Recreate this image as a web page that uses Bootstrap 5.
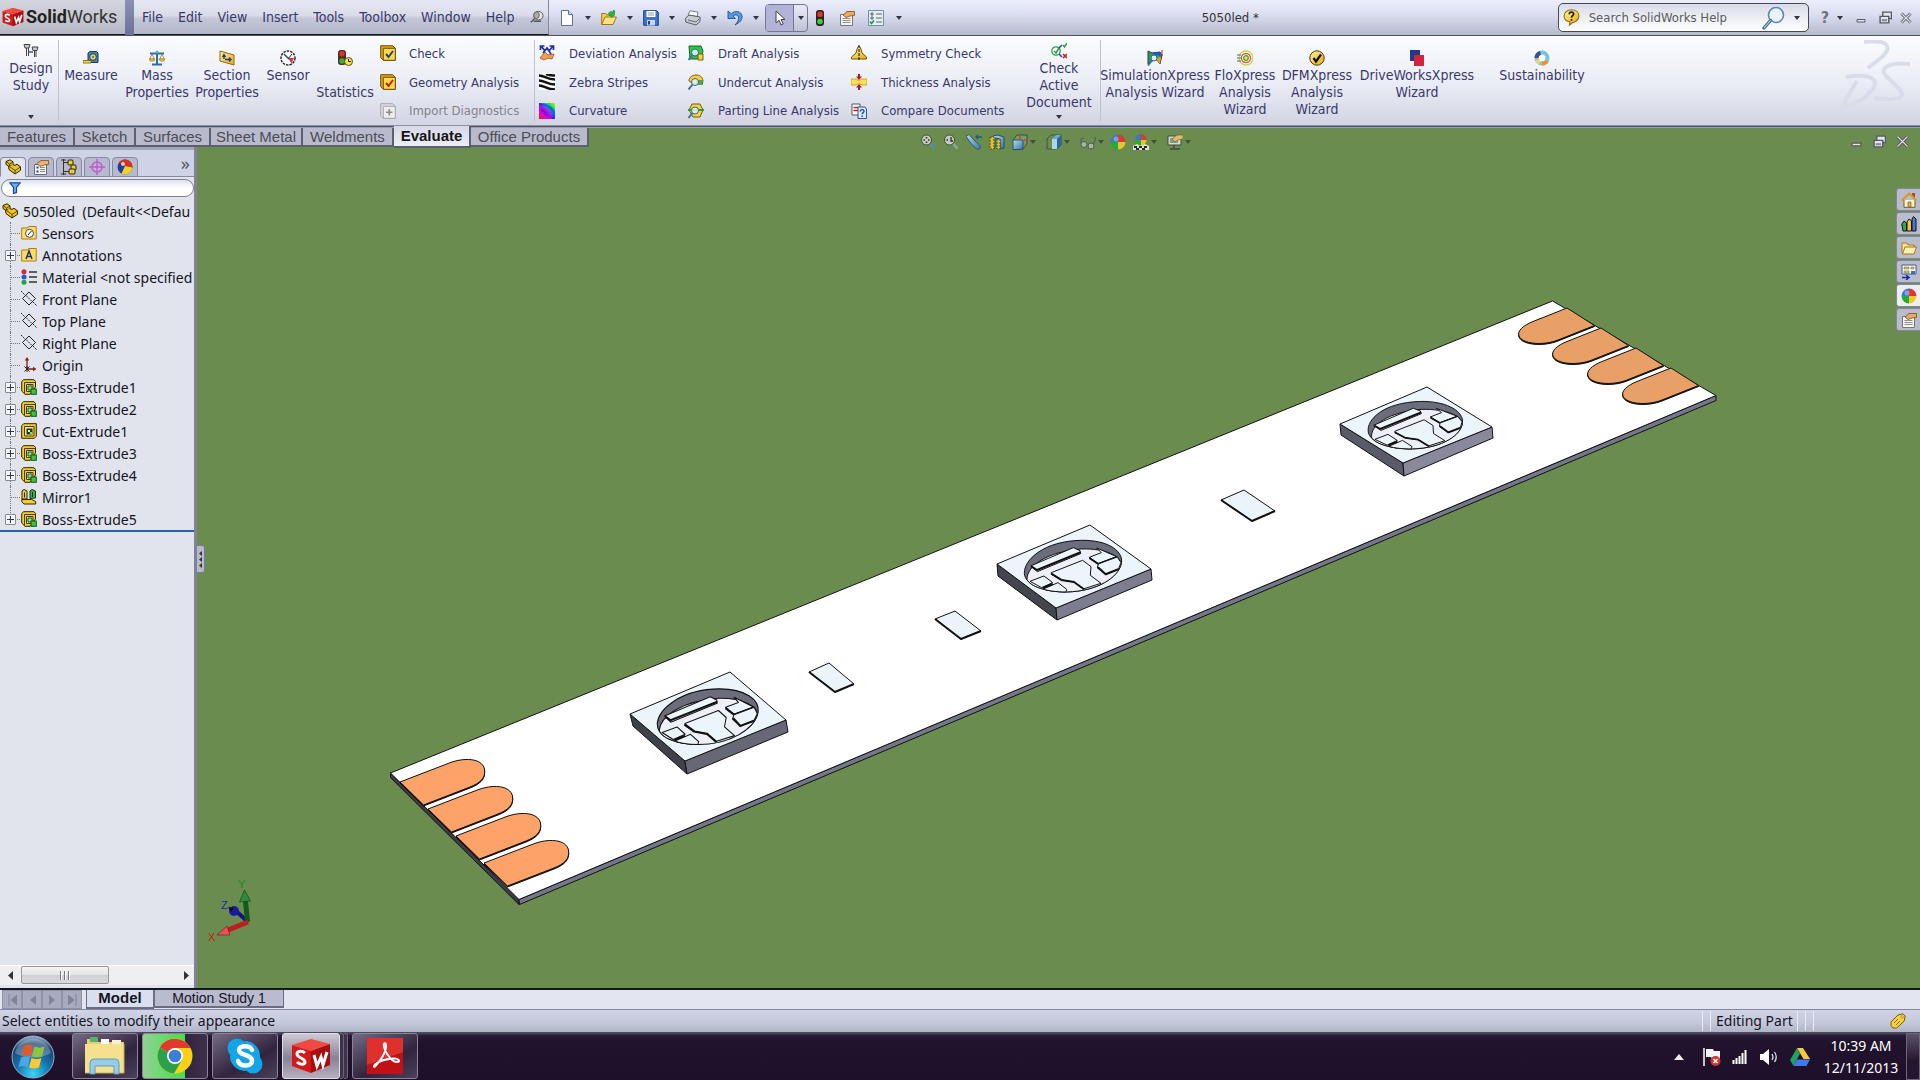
<!DOCTYPE html>
<html lang="en">
<head>
<meta charset="utf-8">
<meta name="viewport" content="width=device-width, initial-scale=1">
<title>SolidWorks - 5050led</title>
<link href="https://cdn.jsdelivr.net/npm/bootstrap@5.3.0/dist/css/bootstrap.min.css" rel="stylesheet">
<style>
:root{--ink:#38386c;--line:#50545f;--ui:"DejaVu Sans Condensed","DejaVu Sans",sans-serif;--seg:"Noto Sans","Open Sans",sans-serif;--ari:"Liberation Sans",Arial,sans-serif}
body{font-family:var(--ui);font-size:14px;line-height:17px;color:#15151f;background:#6a8c4f;overflow:hidden}
svg{display:block;flex:none}
.ico{width:16px;height:16px}
button,.btn{border:0;border-radius:0;padding:0;background:none;color:inherit;font-size:inherit;line-height:inherit}
a{color:inherit;text-decoration:none}
.caret{width:0;height:0;border:3px solid transparent;border-top:4px solid #33334a;border-bottom:0;flex:none}

/* title bar */
.titlebar{height:36px;background:linear-gradient(#eceefb,#dcdff0 40%,#b6bacf);border-bottom:1px solid var(--line)}
.brandbox{width:125px;padding-left:2px;gap:2px;background:linear-gradient(#d4d5de,#c4c6d0 60%,#b4b6c2);border-bottom:1px solid #15151f}
.brandname{font:400 18px/24px Roboto,sans-serif;color:#333}
.brandname b{color:#222}
.divider{width:9px;background:linear-gradient(#8d90b5,#6d709a)}
.menubar{width:415px;padding-left:8px;background:linear-gradient(#e6e8f4,#dadce9 45%,#c3c6d6 55%,#b4b7ca);border-right:1px solid #84889c;border-bottom:1px solid #15151f;color:var(--ink)}
.menubar .nav-link{padding:0;color:var(--ink)}
.menubar .nav{gap:15px}
.quick{padding-left:6px}
.tool{width:24px;height:27px;display:flex;align-items:center;justify-content:center}
.drop{width:18px;height:27px;display:flex;align-items:center;justify-content:center}
.wide{width:29px}
.picked{height:28px;border:1px solid #74778e;border-radius:4px;overflow:hidden}
.picked .tool{width:28px;background:#b1b4d8;border-right:1px solid #74778e}
.picked .drop{width:13px}
.doctitle{width:60px;color:#333;font-size:13px}
.searchbox{width:251px;height:29px;border:1px solid #444757;border-radius:5px;background:linear-gradient(#d9dce8,#fff);padding:0 4px;margin-left:296px}
.searchbox input{border:0;background:none;outline:0;font-size:13px;flex:1;min-width:0;color:#555;padding:0 0 0 9px}
.searchbox input::placeholder{color:#5b5b63;opacity:1}

/* ribbon */
.ribbon{height:89px;background:linear-gradient(#fbfcff,#eceef6 50%,#d2d4e2);color:var(--ink)}
.ribbonedge{height:3px;background:linear-gradient(#8e92a8 33%,var(--line) 33% 66%,#9a9eb2 66%)}
.vsep{width:1px;background:#bfc1cf;margin:4px 0}
.big{display:flex;flex-direction:column;align-items:center;justify-content:flex-start;text-align:center;padding-top:14px;flex:none}
.big svg{margin-bottom:1px}
.big.tall{padding-top:7px;padding-left:4px;position:relative}
.big.tall .caret{position:absolute;bottom:6px}
.rows{display:flex;flex-direction:column;padding:3px 0 0 4px;flex:none;font-size:13px}
.rowbtn{display:flex;align-items:center;gap:14px;height:29px;white-space:nowrap}
.c1 .rowbtn{gap:13px}
.dim{color:#84848e}
.w50{width:50px}.w58{width:58px}.w64{width:64px}.w68{width:68px}.w72{width:72px}.w82{width:86px}.w108{width:108px}.w122{width:122px}.w128{width:128px}
.c1{width:157px;padding-left:3px}.c2{width:149px}.c3{width:163px}.c4{width:167px}

/* workspace */
.work{background:#6a8d4f}
.scene{position:absolute;inset:0;width:100%;height:100%}
.cmtabs{height:19px;font:15px/18px var(--ari);color:#484852;z-index:2}
.cmtabs .nav-link{padding:0;text-align:center;color:#4c4c56;background:#b9bbcd;border-right:2px solid #5c5f70;border-bottom:2px solid #5c5f70;border-radius:0;height:19px;line-height:17px}
.cmtabs .nav-link.active{background:linear-gradient(#d6d8e5,#eceef5);color:#15151c;font-weight:700;height:22px;margin-top:-2px;line-height:20px}
.t61{width:61px}.t74{width:75px}.t75{width:75px}.t77{width:77px}.t91{width:91px}.t92{width:92px}.t118{width:118px}
.headsup{top:6px;left:917px;gap:1px;opacity:.9}
.headsup .tool{width:22px;height:16px}
.headsup .drop{width:10px;height:16px;margin-left:-4px}
.headsup .caret{border-top-color:#3d4c33}
.docbtns{top:7px;right:11px;gap:10px}
.side{width:197px;background:#e1e4ec;border-right:3px solid #7f8399;z-index:1;font-family:var(--seg)}
.sidehead{height:30px;background:#cfd3e6;border-top:3px solid #a2a6bb;border-bottom:1px solid #8589a2;gap:2px}
.ftab{width:26px;height:20px;margin-bottom:-1px;border:1px solid #8589a2;border-bottom-color:#8589a2;border-radius:4px 4px 0 0;background:#b7bace;display:flex;align-items:center;justify-content:center}
.ftab.on{background:#e1e4ec;border-bottom-color:#e1e4ec}
.more{font-size:18px;color:#555868;margin-left:auto;padding-right:4px}
.filter{height:18px;margin:2px 0 3px 1px;border:1px solid #7d8193;border-radius:9px;background:linear-gradient(#dfe2ef,#fff 50%);padding-left:7px}
.filter input{border:0;background:none;outline:0;flex:1;min-width:0;height:14px;padding:0 4px}
.tree{margin:0;padding:0;list-style:none;overflow:hidden;border-bottom:2px solid #2a62a8;font-size:14px;white-space:nowrap;position:relative}
.tree li{height:22px;display:flex;align-items:center;position:relative}
.tree .root{padding-left:2px;gap:5px}
.tree .kid{padding-left:21px;gap:5px}
.tree .kid::before{content:"";position:absolute;left:10px;top:0;height:22px;border-left:1px dotted #777}
.tree .kid:last-child::before{height:11px}
.tree .kid::after{content:"";position:absolute;left:11px;top:11px;width:9px;border-top:1px dotted #777}
.plus{position:absolute;left:5px;top:6px;width:11px;height:11px;z-index:1;border:1px solid #868a96;border-radius:1px;background:linear-gradient(#2f3a66,#2f3a66) 1px 4px/7px 1px no-repeat,linear-gradient(#2f3a66,#2f3a66) 4px 1px/1px 7px no-repeat,#f6f6fa}
.hbar{height:20px;background:#efeff2;margin-bottom:3px;border-top:1px solid #fff}
.hbar button{width:21px;height:18px;display:flex;align-items:center;justify-content:center}
.hbar button:last-child{width:16px}
.thumb{width:88px;height:18px;border:1px solid #979797;border-radius:2px;background:linear-gradient(#f4f4f4,#e4e4e6 50%,#cfcfd4 50%,#d9d9de);display:flex;align-items:center;justify-content:center;gap:2px}
.thumb i{width:2px;height:9px;background:#777a80;border-right:1px solid #fff}
.handle{left:197px;top:417px;width:8px;height:28px;background:#b7bace;border:1px solid #777b92;border-left:0;border-radius:0 3px 3px 0;z-index:2}
.taskpane{top:60px;right:0;z-index:2;gap:1px}
.taskpane button{width:24px;height:23px;border:1px solid #83879d;border-right:0;border-radius:3px 0 0 3px;background:#b9bccd;display:flex;align-items:center;justify-content:center}
.taskpane .on{background:#eceef4}

/* footer rows */
.sheets{height:22px;background:#e3e6ee;border-top:2px solid #15151f;border-bottom:1px solid #8286a0;padding-left:2px}
.sheets .nav-link{padding:0;text-align:center;height:18px;border:1px solid #6a6d82;border-top:0;border-bottom-width:2px;color:#15151f;background:#b9bbcf;border-radius:0;font:14px/16px var(--ari)}
.sheets .nav-link.active{background:#dadff0;font-weight:700;font-size:15px;height:19px}
.vcr{width:20px;height:19px;border:1px solid #8e91a8;background:#a8abc0;display:flex;align-items:center;justify-content:center}
.mtab{width:68px}.stab{width:130px}
.statusbar{height:23px;background:linear-gradient(#d0d4e6,#c3c7da 60%,#b0b4c8);border-bottom:1px solid #4b4b5c;font:14px/22px var(--seg);padding-left:2px}
.pane{border-left:1px solid #e9ebf4;height:20px;width:8px;line-height:20px}
.editing{width:87px;padding-left:5px}
.statustag{margin:0 14px 0 69px}
.taskbar{height:47px;background:linear-gradient(#4a3f58 1px,#2b1c3a 2px,#21122d 8px,#1e0f2a);color:#fff;font-family:var(--seg)}
.orb{width:66px;margin-right:6px;display:flex;align-items:center;justify-content:center}
.task{width:66px;height:46px;border:1px solid #8d8498;border-radius:3px;background:linear-gradient(150deg,#756b84,#41354f 45%,#30243f 60%,#4b405a);display:flex;align-items:center;justify-content:center}
.task.progress-on{background:linear-gradient(90deg,#8fd391,#44e04a 66%,#30243f 66%,#3d314b)}
.task.front{width:58px;background:linear-gradient(#cdc9d4,#8a8297 55%,#b5b0be);border-color:#e0dde6}
.stack{width:4px;height:46px;border:1px solid #6d6478;border-left:0;border-radius:0 3px 3px 0;background:#3d314b}
.tray{gap:11px}
.clock{width:80px;margin-right:5px;padding-top:2px;font-size:14px;line-height:22px;text-align:center}
.peek{width:14px;border:1px solid #6f667b;background:linear-gradient(#5c5368,#241630 60%)}
</style>
</head>
<body>
<svg width="0" height="0" class="position-absolute" aria-hidden="true">
<defs>
<linearGradient id="gy" x1="0" y1="0" x2="1" y2="1"><stop offset="0" stop-color="#fff3a0"/><stop offset="1" stop-color="#eaa90c"/></linearGradient>
<linearGradient id="gb" x1="0" y1="0" x2="1" y2="1"><stop offset="0" stop-color="#c4e6fb"/><stop offset="1" stop-color="#2b74b8"/></linearGradient>
<radialGradient id="orbg" cx=".5" cy=".9" r=".9"><stop offset="0" stop-color="#39d5f5"/><stop offset=".45" stop-color="#1571ad"/><stop offset=".8" stop-color="#1d4670"/><stop offset="1" stop-color="#9fb8cc"/></radialGradient>
<linearGradient id="rb" x1="0" y1="1" x2="1" y2="0"><stop offset="0" stop-color="#e11"/><stop offset=".25" stop-color="#e0c"/><stop offset=".45" stop-color="#22f"/><stop offset=".62" stop-color="#0ce"/><stop offset=".8" stop-color="#1e4"/><stop offset="1" stop-color="#fd0"/></linearGradient>
<symbol id="part" viewBox="0 0 16 16"><path d="M1 2.500 5 .8l3 2v3l2 .5 2-1 3.500 2.500v3.500L10 15 4 10.500 3.500 7 1 5.500z" fill="#f0c419" stroke="#2d2200"/><path d="M1 2.500 4.500 5 8 3M4.500 5v2.500L10 11.500l5.500-3.500M10 11.500V15M3.500 7l3-1" fill="none" stroke="#4a3a00" stroke-width=".9"/></symbol>
<symbol id="propman" viewBox="0 0 16 16"><path d="M1.500 5.500h12v10h-12z" fill="#f2f2ee" stroke="#6c6c70"/><path d="M3.500 8.500h2M3.500 12.500h2" stroke="#24a" stroke-width="2"/><path d="M7 8.500h5M7 10.500h5M7 12.500h5" stroke="#888"/><path d="M4 4.500 8 1.500h7.500v4L11 6 7 7.500z" fill="#e6b479" stroke="#7c4b1c" stroke-width=".8"/></symbol>
<symbol id="props" viewBox="0 0 16 16"><path d="M1.500 4.500h12v11h-12z" fill="#f6f5f0" stroke="#77777b"/><path d="M3.500 8.500h8M3.500 10.500h8M3.500 12.500h8" stroke="#8d8d92"/><path d="M4 5 8 1.500h7.500v4L11 6 7 7.500z" fill="#e9a960" stroke="#7c4b1c" stroke-width=".8"/></symbol>
<symbol id="conf" viewBox="0 0 16 16"><path d="M2.500 0v16M2.500 3.500h5M2.500 12.500h5" stroke="#333"/><path d="M0 1h5M0 15h5" stroke="#333"/><rect x="7" y="1" width="5" height="5" rx="1" fill="#f5cd22" stroke="#222"/><rect x="10" y="6" width="5" height="5" rx="1" fill="#f5cd22" stroke="#222"/><rect x="8" y="10" width="6" height="5" rx="1" fill="#f5cd22" stroke="#222"/></symbol>
<symbol id="target" viewBox="0 0 16 16"><circle cx="8" cy="8" r="5" fill="none" stroke="#c05bd0" stroke-width="1.500"/><path d="M8 0v16M0 8h16" stroke="#c05bd0" stroke-width="1.400"/></symbol>
<symbol id="ball" viewBox="0 0 16 16"><path d="M8 8V.5A7.500 7.500 0 0 1 15.500 8z" fill="#e3352c"/><path d="M8 8h7.500A7.500 7.500 0 0 1 8 15.500z" fill="#f3cb2d"/><path d="M8 8v7.500A7.500 7.500 0 0 1 .5 8z" fill="#1faf35"/><path d="M8 8H.5A7.500 7.500 0 0 1 8 .5z" fill="#3774dc"/><circle cx="6" cy="5" r="2.500" fill="#fff" opacity=".35"/></symbol>
<symbol id="ball2" viewBox="0 0 16 16"><circle cx="8" cy="8" r="7.500" fill="#263c9c"/><path d="M8 .5a7.500 7.500 0 0 1 7.500 8L8 7 2 3.500A7.500 7.500 0 0 1 8 .5z" fill="#dc3122"/><path d="M8 7l7.500 1.500a7.500 7.500 0 0 1-11 6z" fill="#f0d22a"/><circle cx="6" cy="5" r="2" fill="#fff" opacity=".75"/></symbol>
<symbol id="funnel" viewBox="0 0 12 12"><path d="M.8.8h10.400L7.500 5.500v5l-3 1v-6z" fill="#69b1f2" stroke="#17479e" stroke-width="1.200"/></symbol>
<symbol id="fsens" viewBox="0 0 16 16"><path d="M.7 3h6l1-1.500h7.500V14H.7z" fill="#fbdf62" stroke="#b07c10"/><circle cx="8.500" cy="8.300" r="4" fill="#fff" stroke="#445"/><path d="m7 10 3.500-4" stroke="#224"/></symbol>
<symbol id="fann" viewBox="0 0 16 16"><path d="M.7 3h6l1-1.500h7.500V14H.7z" fill="#fbdf62" stroke="#b07c10"/><path d="m5 12 3-8 3 8M6 9.500h4" fill="none" stroke="#1c2f7c" stroke-width="1.500"/></symbol>
<symbol id="mat" viewBox="0 0 16 16"><circle cx="3" cy="2.800" r="2.500" fill="#d8253c"/><circle cx="3" cy="8" r="2.500" fill="#2b54d0"/><circle cx="3" cy="13.200" r="2.500" fill="#22a046"/><path d="M8 3h8M8 8h8M8 13h8" stroke="#333" stroke-width="1.300"/></symbol>
<symbol id="plane" viewBox="0 0 16 16"><path d="M8 1 14.500 7.500 8 14 1.500 7.500z" fill="none" stroke="#222"/><path d="M0 0l4 4M12 11l4 4M5 4.500l6 6" stroke="#222" stroke-dasharray="2 1"/></symbol>
<symbol id="origin" viewBox="0 0 16 16"><path d="M6 12V2M6 12h8" stroke="#8b1a1a" stroke-width="1.300"/><path d="M6 0 3.800 3.500h4.400zM15.500 12 12 9.800v4.400z" fill="#8b1a1a"/><path d="m3.500 9.500 5 5m0-5-5 5M6 9v6" stroke="#222"/></symbol>
<symbol id="boss" viewBox="0 0 16 16"><path d="M.7 2.500 2.700.7H13l1.500 1.800V8L9 15.300H4L.7 12z" fill="#f1cf2e" stroke="#2d2400"/><path d="M3.500 3.500h11M3.500 3.500V14.500" fill="none" stroke="#4a3b00"/><path d="M5.500 5.500H12v7H5.500z" fill="#fbeE96" stroke="#4a3b00"/><path d="M7 7h4v4H7z" fill="#9de39b" stroke="#0d5a17"/><rect x="10" y="10" width="5.300" height="5.300" fill="#43bf42" stroke="#0d5a17"/></symbol>
<symbol id="cut" viewBox="0 0 16 16"><path d="M.7 2.700 2.700.7h12.600v12.600l-2 2H.7z" fill="#f1cf2e" stroke="#2d2400"/><path d="M3.500 3.500h9.500v9.500H3.500z" fill="#f9e577" stroke="#4a3b00"/><path d="M5.500 5.500h6v6h-6z" fill="#1a3c22"/><path d="M7 7h2v2H7z" fill="#d9f5d9"/><path d="M9 9h2v2H9z" fill="#8be08b"/></symbol>
<symbol id="mirror" viewBox="0 0 16 16"><path d="M1 2l2-1.500L6 2v8H1zM.7 10.500h10l4 2V15H3l-2-2z" fill="#f1cf2e" stroke="#2d2400"/><path d="M9 2l2-1.500L14.500 2v7L9 9.500z" fill="#3fae48" stroke="#0c3d14"/><path d="M3.500 3.500v5M11.500 3v5" stroke="#222"/></symbol>
<symbol id="newdoc" viewBox="0 0 16 16"><path d="M2.500.5h7L13.500 4.500v11h-11z" fill="#fdfdff" stroke="#5c7291"/><path d="M9.500.5v4h4" fill="#cfe0f2" stroke="#5c7291"/></symbol>
<symbol id="open" viewBox="0 0 16 16"><path d="M.7 14.500v-11h4l1 1.500H11v2" fill="#f5cf55" stroke="#a4741a"/><path d="M.7 14.500 4 7h11.500l-3.500 7.500z" fill="#fbe488" stroke="#a4741a"/><path d="M7 4.500C8 1 11 1 12 3V.5h1.500V5l-2.500 2.500L8 5h2.500" fill="#31b83c" stroke="#157a22" stroke-width=".6"/></symbol>
<symbol id="save" viewBox="0 0 16 16"><path d="M.7.7h13l1.600 1.600v13H.7z" fill="#3f74cb" stroke="#1c3f86"/><path d="M3.500 1h9v6h-9z" fill="#fff"/><path d="M5 3h6M5 5h6" stroke="#999"/><path d="M4 10h8v5.500H4z" fill="#c9d8ef"/><path d="M5 11h2v3.500H5z" fill="#1c3f86"/></symbol>
<symbol id="print" viewBox="0 0 16 16"><path d="M3 5 5 .7l8 1.500-1 4.500z" fill="#fff" stroke="#6f7f95"/><path d="m.7 8 3.300-3 11 2v4.500L11 15 .7 12z" fill="#c8ccd4" stroke="#555d6c"/><path d="m3 10 8 2 3-3" fill="none" stroke="#667"/></symbol>
<symbol id="undo" viewBox="0 0 16 16"><path d="M1 1v7.500h7.500L6 6C9 3.500 12 5.500 11.500 9c-.3 2.200-1.700 4-3.500 6 5-2.500 7.500-5.500 7-9C14.300 1 8 0 4.300 3.900z" fill="#5699dc" stroke="#1c549e" stroke-width=".9"/></symbol>
<symbol id="cursor" viewBox="0 0 16 16"><path d="M4 1v12l3-2.800L9 15l2.200-1L9 9.500h4z" fill="#fff" stroke="#444"/></symbol>
<symbol id="light" viewBox="0 0 16 16"><rect x="4" y="0" width="8" height="16" rx="3" fill="#33221c"/><circle cx="8" cy="4.300" r="2.800" fill="#e13434"/><circle cx="8" cy="11.500" r="2.800" fill="#37ce45"/></symbol>
<symbol id="opts" viewBox="0 0 16 16"><path d="M.5.500h15v15H.5z" fill="#e6eef5" stroke="#7590a5"/><path d="M3 3h2v2H3zM3 7h2v2H3z" fill="none" stroke="#567"/><path d="M8 4h6M8 8h6M8 12h6" stroke="#666"/><path d="m2 11.500 1.500 2L6 10.500" fill="none" stroke="#1a9a35" stroke-width="1.600"/></symbol>
<symbol id="pin" viewBox="0 0 16 16"><ellipse cx="10" cy="6" rx="5" ry="4.500" fill="#e6e6ea" stroke="#555"/><ellipse cx="8" cy="5.500" rx="3" ry="3.500" fill="#aaa" stroke="#666"/><path d="M2 13l4-4M5 12h8" stroke="#555" stroke-width="1.500"/></symbol>
<symbol id="help" viewBox="0 0 16 16"><path d="M8 .7c4.500 0 7 2.600 7 5.800 0 4-4 6-6 6.300L6 15.300 6.500 12C3 11.500 1 9.500 1 6.500 1 3.300 3.800.7 8 .7z" fill="url(#gy)" stroke="#8f6a0b"/><path d="M5.800 5c.2-3 4.800-2.500 4.200 0C9.700 6.200 8 6.300 8 8.300M8 9.500v1.600" stroke="#222" stroke-width="1.600" fill="none"/></symbol>
<symbol id="lens" viewBox="0 0 24 24"><circle cx="14" cy="9" r="7.500" fill="#eaf3fa" stroke="#5a88ad" stroke-width="1.600"/><path d="M8.500 14.500 2 22" stroke="#47759b" stroke-width="3.400" stroke-linecap="round"/><path d="M8.500 14.500 2 22" stroke="#cfe2f0" stroke-width="1"/></symbol>
<symbol id="wmin" viewBox="0 0 12 12"><path d="M2 7.500h8v2.500H2z" fill="#e8e8ec" stroke="#555866"/></symbol>
<symbol id="wres" viewBox="0 0 12 12"><path d="M3.500 1h8v6h-8z" fill="#e4e6ee" stroke="#555866" stroke-width="1.300"/><path d="M1 5h8v6H1z" fill="#e4e6ee" stroke="#555866" stroke-width="1.300"/><path d="M2.500 7.500h5v2h-5z" fill="#888b99"/></symbol>
<symbol id="wcls" viewBox="0 0 12 12"><path d="m1.500 1.500 9 9m0-9-9 9" stroke="#555866" stroke-width="3"/><path d="m1.500 1.500 9 9m0-9-9 9" stroke="#dfe1e8" stroke-width="1.300"/></symbol>
<symbol id="study" viewBox="0 0 16 16"><path d="M1 1.500h6L6 5H2zM3.500 5v8M5.500 5v8M9 4h6l-1 3.500h-4zM11.500 8v6M13 8v6" fill="#ccc" stroke="#444"/><path d="M6 9h4" stroke="#25b" stroke-width="1.400"/></symbol>
<symbol id="measure" viewBox="0 0 16 16"><path d="M5 3l2-1.500h6.500L15 3v9.500H5z" fill="#4683bd" stroke="#16395f"/><circle cx="10" cy="7" r="3.300" fill="#f8dc55" stroke="#16395f"/><circle cx="10" cy="7" r="1.200" fill="#4683bd"/><path d="M0 10.500h8v2.500H0z" fill="#f8dc33" stroke="#765a08" stroke-width=".8"/></symbol>
<symbol id="mass" viewBox="0 0 16 16"><path d="M8 1v13M1 3.500h14M3 14.500h10" stroke="#2271b8" stroke-width="2"/><circle cx="8" cy="2" r="1.600" fill="#66a8e0"/><path d="M3 4 .8 9h4.400zM13 4l-2.200 5h4.400z" fill="#fff" stroke="#987414" stroke-width=".8"/><path d="M0 9h6c0 3-6 3-6 0zM10 9h6c0 3-6 3-6 0z" fill="#f1c232" stroke="#987414" stroke-width=".6"/></symbol>
<symbol id="section" viewBox="0 0 16 16"><path d="m1 1 14 4v10L1 11z" fill="url(#gy)" stroke="#8b6a0c"/><path d="M5 9V5m-1.500 2L5 4.500 6.500 7M6 9.500h6m-2-2 2 2-2 2" fill="none" stroke="#1c3b94" stroke-width="1.400"/></symbol>
<symbol id="gauge" viewBox="0 0 16 16"><circle cx="8" cy="8" r="7" fill="#fff" stroke="#222" stroke-width="1.400" stroke-dasharray="2.500 1"/><path d="m4 4 5 5" stroke="#224a9b" stroke-width="1.500"/><path d="M8 8h6l-2.500 5.500z" fill="#d93636"/><path d="m8 9 4-5" stroke="#222"/></symbol>
<symbol id="stats" viewBox="0 0 16 16"><rect x="1" y="0" width="8" height="15" rx="3" fill="#4b2d24"/><circle cx="5" cy="3.700" r="2.700" fill="#d73535"/><circle cx="5" cy="11" r="2.700" fill="#2fb43e"/><circle cx="11.500" cy="11.500" r="4" fill="#f6e24a" stroke="#5e5110"/><path d="M11.500 9v2.500H14" fill="none" stroke="#222"/></symbol>
<symbol id="chk" viewBox="0 0 16 16"><path d="M.7.7h12l2.600 2.600v12H3.300L.7 12.700z" fill="#e4a112" stroke="#70500b"/><path d="M3.300 3.300h12v12h-12z" fill="#fdda48" stroke="#70500b"/><path d="m6 9 2.500 3L13 6" fill="none" stroke="#263f91" stroke-width="2"/></symbol>
<symbol id="geo" viewBox="0 0 16 16"><path d="M.7.7h12l2.600 2.600v12H3.300L.7 12.700z" fill="#e4a112" stroke="#70500b"/><path d="M3.300 3.300h12v12h-12z" fill="#fdda48" stroke="#70500b"/><path d="m6 9 2.500 3L13 6" fill="none" stroke="#c3201b" stroke-width="2"/></symbol>
<symbol id="imp" viewBox="0 0 16 16"><path d="M.7.7h12l2.600 2.600v12H3.300L.7 12.700z" fill="#dcdce2" stroke="#a5a5ad"/><path d="M3.300 3.300h12v12h-12z" fill="#eee" stroke="#a5a5ad"/><path d="M9.300 6v6.500M6 9.300h6.500" stroke="#8a8a92" stroke-width="1.600"/></symbol>
<symbol id="dev" viewBox="0 0 16 16"><path d="M1 13 6 7l3 3 6-1-2 5-4-1-4 2z" fill="#efa04a" stroke="#b4632a"/><path d="M2 1l4 5M1.500 5V1h4M14 1l-4 5M10.500 1h4v4M4 8l4-5 4 6" stroke="#1d2fa5" stroke-width="1.700" fill="none"/></symbol>
<symbol id="zebra" viewBox="0 0 16 16"><path d="M0 0h16v16H0z" fill="#fff"/><path d="M0 1.500c6 0 7 4 16 4M0 6.500c6 0 7 4 16 4M0 11.500c6 0 7 4 16 4M7 0c3 1 5 1.500 9 1.500" fill="none" stroke="#111" stroke-width="2.400"/></symbol>
<symbol id="curv" viewBox="0 0 16 16"><path d="M0 0h16v16H0z" fill="url(#rb)"/><path d="M0 6c6 0 8 4 9 10h4C13 8 9 3 0 2z" fill="#e0c" opacity=".7"/><path d="M0 2c8 0 13 5 14 14h2V8C13 3 8 0 0 0z" fill="#22e" opacity=".6"/></symbol>
<symbol id="draft" viewBox="0 0 16 16"><path d="M1 1h12l2 5-2 8H2z" fill="#2fc244" stroke="#0e6e1e"/><path d="M10 9h5v6h-5z" fill="#f7d33a" stroke="#7a5b08"/><circle cx="7" cy="7.500" r="3.500" fill="#e4f4fd" fill-opacity=".85" stroke="#35648c"/><path d="m4.500 10-4 5" stroke="#3b72a6" stroke-width="2"/></symbol>
<symbol id="under" viewBox="0 0 16 16"><path d="M1 7c0-8 14-8 14 0l-1 4-3-3-4 2-3-1z" fill="#f5d33c" stroke="#7a5b08"/><path d="M8 6h6v5H9z" fill="#3dae4a"/><circle cx="7" cy="8" r="3.500" fill="#e4f4fd" fill-opacity=".85" stroke="#35648c"/><path d="m4.500 10.500-4 5" stroke="#3b72a6" stroke-width="2"/></symbol>
<symbol id="partl" viewBox="0 0 16 16"><path d="m4 1 8 0 3 6-3 7H5L1 7z" fill="#f5d33c" stroke="#7a5b08"/><path d="M0 7h16" stroke="#1fa637" stroke-width="2"/><circle cx="7" cy="7.500" r="3.500" fill="#e4f4fd" fill-opacity=".85" stroke="#35648c"/><path d="m4.500 10-4 5" stroke="#3b72a6" stroke-width="2"/></symbol>
<symbol id="symm" viewBox="0 0 16 16"><path d="M6.500 2.500c1-1.500 2-1.500 3 0L11 8l4.500 4v2H.5v-2L5 8z" fill="url(#gy)" stroke="#70500b"/><path d="M8 0v16" stroke="#111" stroke-dasharray="3 1"/></symbol>
<symbol id="thick" viewBox="0 0 16 16"><path d="M0 5h5l3 1.500L11 5h5v6h-5L8 9.500 5 11H0z" fill="#fae14d" stroke="#b88c18" stroke-width=".7"/><path d="M8 0v3M8 16v-3" stroke="#b31b1b" stroke-width="2"/><path d="M5 2.500h6L8 6zM5 13.500h6L8 10z" fill="#b31b1b"/></symbol>
<symbol id="comp" viewBox="0 0 16 16"><path d="M1 1h8v11H1z" fill="#fff" stroke="#555"/><path d="M2.500 4.500h5M2.500 7.500h5" stroke="#d01c1c" stroke-width="1.700"/><path d="M7 4h7l1.500 2v9.500H7z" fill="#dbe9f8" stroke="#2b5797"/><path d="M9.300 8.500c0-2.500 4-2.500 3.700 0-.1 1.200-1.800 1-1.800 2.800M11.200 12.500V14" stroke="#17479e" stroke-width="1.400" fill="none"/></symbol>
<symbol id="cad" viewBox="0 0 16 16"><circle cx="5" cy="8" r="4.200" fill="#fff" stroke="#2a9c48" stroke-width="1.300"/><path d="m3 8 2 2 3-5M12 2l1.500 2L16 0" fill="none" stroke="#2a9c48" stroke-width="1.500"/><path d="m12 11 4 4m0-4-4 4" stroke="#c42020" stroke-width="1.600"/><path d="m8 5 3-3M8 11l3 3" stroke="#2746b5" stroke-width="1.500"/></symbol>
<symbol id="sim" viewBox="0 0 16 16"><path d="M1 1l4 2 8-1 2 3-2 9-3-4-6 1-3 3z" fill="#2f9c4d" stroke="#1c3c5c"/><path d="M5 3l8-1 1 4-6-1z" fill="#2359c6"/><path d="M10 8l4-1-1 7-3-3z" fill="#e2a01f"/><circle cx="7" cy="8" r="3" fill="#dcefff" stroke="#35648c"/><path d="m5 10.500-4 5" stroke="#3b72a6" stroke-width="2"/><path d="M15 0v6" stroke="#c22"/></symbol>
<symbol id="flo" viewBox="0 0 16 16"><circle cx="9" cy="8" r="7" fill="#fff" stroke="#c9d94b" stroke-width="1.500"/><circle cx="9" cy="8" r="4.600" fill="#ffe" stroke="#e25a3c" stroke-width="1.500"/><circle cx="9" cy="8" r="2.300" fill="#fbe04a" stroke="#3aa04c" stroke-width="1.300"/><path d="M0 5h4M0 8h4M0 11h4" stroke="#37a"/></symbol>
<symbol id="dfm" viewBox="0 0 16 16"><circle cx="8" cy="8" r="7.200" fill="url(#gy)" stroke="#4a3a10"/><path d="m4.500 8 2.500 3.500L12 4.500" fill="none" stroke="#111" stroke-width="2.200"/></symbol>
<symbol id="dwx" viewBox="0 0 16 16"><path d="M1 0h10v11H1z" fill="#20398e"/><path d="M5 5h10v11H5z" fill="#d3243a"/></symbol>
<symbol id="sust" viewBox="0 0 16 16"><circle cx="8" cy="8" r="5.500" fill="#fff" stroke="#7ac2e3" stroke-width="4"/><path d="M2.500 8a5.500 5.500 0 0 1 4-5.200" fill="none" stroke="#3f4f94" stroke-width="4"/><path d="M13 11a5.500 5.500 0 0 1-5 2.500" fill="none" stroke="#ef9226" stroke-width="4"/><path d="M2.800 10a5.500 5.500 0 0 0 3 3" fill="none" stroke="#f0d75a" stroke-width="4"/></symbol>
<symbol id="zfit" viewBox="0 0 16 16"><circle cx="6.500" cy="6" r="5" fill="#cfd6c8" stroke="#3c4638"/><path d="M6.500 3v1.500M6.500 7.500V9M3.500 6H5M8 6h1.500" stroke="#223" stroke-width="1.600"/><path d="m10.500 10 4 4.500" stroke="#4c8fc6" stroke-width="2.500"/></symbol>
<symbol id="zarea" viewBox="0 0 16 16"><circle cx="6.500" cy="6" r="5" fill="#cfd6c8" stroke="#3c4638"/><path d="M3.500 6H5M8 3v4h2" stroke="#223" stroke-width="1.300" fill="none"/><path d="m10.500 10 4 4.500" stroke="#8fa8ba" stroke-width="2.500"/></symbol>
<symbol id="prev" viewBox="0 0 16 16"><path d="m0 2 3-1.500L8 6l6.500 6-.5 2.500-3 1L4.500 9z" fill="url(#gb)" stroke="#25517c"/><path d="M16 3h-6m2-2-2 2 2 2" fill="none" stroke="#1f50a0" stroke-width="1.300"/></symbol>
<symbol id="secv" viewBox="0 0 16 16"><path d="M4 2 9 1l6 2v11l-4 1V5L6 4v10H4z" fill="url(#gb)" stroke="#1c4770"/><path d="M1 3h4v12H1zM8 5h3v10H8z" fill="#e8c52e" stroke="#5b4a08" stroke-dasharray="2 1"/></symbol>
<symbol id="vori" viewBox="0 0 16 16"><path d="M1 6 5 1h10v9l-4 5" fill="#9fb79a" fill-opacity=".4" stroke="#39463a"/><path d="M1 6h10v9.500H1z" fill="url(#gb)" stroke="#244c70"/><path d="M8 1v4M12 6h4M13 10l2 1" stroke="#c8402a" stroke-width="1.500"/></symbol>
<symbol id="dsty" viewBox="0 0 16 16"><path d="M1 5 5 1h10v10l-4 4H1z" fill="none" stroke="#3b4f40"/><path d="M6 5h5v10H6z" fill="#b7dcf5"/><path d="m11 5 4-4v10l-4 4z" fill="#2261ad"/><path d="m6 5 4-4h5l-4 4z" fill="#6caee2"/></symbol>
<symbol id="hide" viewBox="0 0 16 16"><circle cx="4" cy="10.500" r="3" fill="#a7bdae" stroke="#49594c"/><circle cx="11" cy="12" r="3" fill="#a7bdae" stroke="#49594c"/><path d="M1 9V5l3-1M13.500 10l2.500-6h-2" fill="none" stroke="#49594c"/></symbol>
<symbol id="scn" viewBox="0 0 16 16"><path d="M0 16v-4l4-2h8l4 2v4z" fill="#e9e9e9"/><path d="M1 12h3v2H1zM6 12h3v2H6zM11 12h3v2h-3zM3 14h3v2H3zM9 14h3v2H9z" fill="#222"/><path d="M8 6V0a5.500 5.500 0 0 1 5.500 6z" fill="#e3352c"/><path d="M8 6h5.500A5.500 5.500 0 0 1 8 11.500z" fill="#f3cb2d"/><path d="M8 6v5.500A5.500 5.500 0 0 1 2.500 6z" fill="#1faf35"/><path d="M8 6H2.500A5.500 5.500 0 0 1 8 0z" fill="#3774dc"/></symbol>
<symbol id="vset" viewBox="0 0 16 16"><path d="M1 2h13v9H1z" fill="#dfe4dc" stroke="#3c443a"/><path d="M3 4h8v5H3z" fill="#8d9c88"/><path d="M7 11v3M3 15h10" stroke="#3c443a" stroke-width="1.500"/><path d="m5 5 5-4h6v4l-5 1-3 2z" fill="#e8bf7a" stroke="#7c5a1c" stroke-width=".7"/></symbol>
<symbol id="home" viewBox="0 0 16 16"><path d="M3 8v7.300h11V8" fill="#fdf4cd" stroke="#7b5b22"/><path d="M11 1h3v5h-3z" fill="#b5442c"/><path d="M.8 8.500 8.300 1.500l7 7" fill="none" stroke="#d99a25" stroke-width="2.200"/><path d="M7 10h3v5H7z" fill="#e3ae42" stroke="#7b5b22" stroke-width=".7"/></symbol>
<symbol id="lib" viewBox="0 0 16 16"><path d="M.8 8 3 5l2.500 2v8H2z" fill="#3aa54a" stroke="#111"/><path d="M6 6l2-3 2.500 2v10H6z" fill="#f0cb37" stroke="#111"/><path d="M11 3l1.500-2.500L15 3v12h-4z" fill="#4b78d8" stroke="#111"/></symbol>
<symbol id="fold" viewBox="0 0 16 16"><path d="M1 13V3h5l1 2h6v2" fill="#fbe290" stroke="#a87718"/><path d="m1.500 14 2.500-7h11.500L13 14z" fill="#fdf0b4" stroke="#a87718"/></symbol>
<symbol id="pal" viewBox="0 0 16 16"><path d="M1 1h14v9H1z" fill="#fff" stroke="#3f5a88"/><path d="M3 3h5v2H3zM10 3h3v2h-3zM3 7h5v2H3z" fill="#e8cf33" stroke="#555" stroke-width=".5"/><path d="M10 7h4v3h-4z" fill="#3e6db5"/><path d="M1 13.500h6M5 11l3 2.500L5 16" stroke="#1726a5" stroke-width="1.500" fill="none"/></symbol>
<symbol id="tag" viewBox="0 0 16 16"><path d="M1 9 8 2l5-1.200L15.200 3l-1 5-7.500 7H3l-2-2.500z" fill="#f7d436" stroke="#7a5a08"/><circle cx="12" cy="4" r="1.200" fill="#fff" stroke="#7a5a08" stroke-width=".6"/><path d="m4 10 4-4M6 12l4-4" stroke="#8c6a10"/></symbol>
<symbol id="swcube" viewBox="0 0 40 36"><path d="M1 7 20 1l19 5-19 7z" fill="#f24a42"/><path d="M1 7l19 6v22L1 28z" fill="#d01a1a"/><path d="M39 6 20 13v22l19-8z" fill="#a80e10"/><path d="M14 15c-3-3-8-2-8 1 0 4 8 4 8 8 0 3-5 3-8 0" fill="none" stroke="#fff" stroke-width="3"/><path d="m23 17 3 11 4-9 2 8 4-13" fill="none" stroke="#fff" stroke-width="3"/></symbol>
</defs>
</svg>

<div class="d-flex flex-column vh-100">
<header class="titlebar d-flex align-items-center flex-shrink-0">
  <div class="brandbox d-flex align-items-center align-self-stretch"><svg width="22" height="22"><use href="#swcube"/></svg><span class="brandname"><b>Solid</b>Works</span></div>
  <div class="divider align-self-stretch"></div>
  <div class="menubar d-flex align-items-center align-self-stretch">
    <nav class="nav flex-nowrap">
      <a class="nav-link" href="#">File</a><a class="nav-link" href="#">Edit</a><a class="nav-link" href="#">View</a><a class="nav-link" href="#">Insert</a><a class="nav-link" href="#">Tools</a><a class="nav-link" href="#">Toolbox</a><a class="nav-link" href="#">Window</a><a class="nav-link" href="#">Help</a>
    </nav>
    <button class="ms-auto me-1" aria-label="Pin menu"><svg width="15" height="15"><use href="#pin"/></svg></button>
  </div>
  <div class="quick d-flex align-items-center flex-grow-1">
    <button class="tool" aria-label="New"><svg class="ico"><use href="#newdoc"/></svg></button><button class="drop" aria-label="New options"><i class="caret"></i></button>
    <button class="tool" aria-label="Open"><svg class="ico"><use href="#open"/></svg></button><button class="drop" aria-label="Open options"><i class="caret"></i></button>
    <button class="tool" aria-label="Save"><svg class="ico"><use href="#save"/></svg></button><button class="drop" aria-label="Save options"><i class="caret"></i></button>
    <button class="tool" aria-label="Print"><svg class="ico"><use href="#print"/></svg></button><button class="drop" aria-label="Print options"><i class="caret"></i></button>
    <button class="tool" aria-label="Undo"><svg class="ico"><use href="#undo"/></svg></button><button class="drop" aria-label="Undo options"><i class="caret"></i></button>
    <span class="picked d-flex"><button class="tool" aria-label="Select"><svg class="ico"><use href="#cursor"/></svg></button><button class="drop" aria-label="Select options"><i class="caret"></i></button></span>
    <button class="tool" aria-label="Rebuild"><svg class="ico"><use href="#light"/></svg></button>
    <button class="tool wide" aria-label="File properties"><svg class="ico"><use href="#props"/></svg></button>
    <button class="tool wide" aria-label="Options"><svg class="ico"><use href="#opts"/></svg></button><button class="drop" aria-label="More options"><i class="caret"></i></button>
  </div>
  <span class="doctitle text-nowrap">5050led *</span>
  <label class="searchbox d-flex align-items-center"><svg width="17" height="17"><use href="#help"/></svg><input type="text" placeholder="Search SolidWorks Help" aria-label="Search SolidWorks Help"><svg width="24" height="24"><use href="#lens"/></svg><i class="caret mx-2 me-1"></i></label>
  <div class="d-flex align-items-center ps-2 pe-2">
    <button class="fw-bold fs-6 text-secondary px-1" aria-label="Help">?</button><i class="caret ms-1 me-2"></i>
    <button class="ms-1" aria-label="Minimize"><svg width="12" height="12"><use href="#wmin"/></svg></button>
    <button class="ms-2 me-1 px-1" aria-label="Restore"><svg width="13" height="13"><use href="#wres"/></svg></button>
    <button aria-label="Close"><svg width="12" height="12"><use href="#wcls"/></svg></button>
  </div>
</header>

<section class="ribbon d-flex flex-shrink-0">
  <button class="big tall w58"><svg class="ico"><use href="#study"/></svg><span>Design<br>Study</span><i class="caret"></i></button><div class="vsep"></div>
  <button class="big w64"><svg class="ico"><use href="#measure"/></svg>Measure</button>
  <button class="big w68"><svg class="ico"><use href="#mass"/></svg><span>Mass<br>Properties</span></button>
  <button class="big w72"><svg class="ico"><use href="#section"/></svg><span>Section<br>Properties</span></button>
  <button class="big w50"><svg class="ico"><use href="#gauge"/></svg>Sensor</button>
  <button class="big w64"><svg class="ico"><use href="#stats"/></svg><span><br>Statistics</span></button>
  <div class="rows c1">
    <button class="rowbtn"><svg class="ico"><use href="#chk"/></svg>Check</button>
    <button class="rowbtn"><svg class="ico"><use href="#geo"/></svg>Geometry Analysis</button>
    <button class="rowbtn dim"><svg class="ico"><use href="#imp"/></svg>Import Diagnostics</button>
  </div><div class="vsep"></div>
  <div class="rows c2">
    <button class="rowbtn"><svg class="ico"><use href="#dev"/></svg>Deviation Analysis</button>
    <button class="rowbtn"><svg class="ico"><use href="#zebra"/></svg>Zebra Stripes</button>
    <button class="rowbtn"><svg class="ico"><use href="#curv"/></svg>Curvature</button>
  </div>
  <div class="rows c3">
    <button class="rowbtn"><svg class="ico"><use href="#draft"/></svg>Draft Analysis</button>
    <button class="rowbtn"><svg class="ico"><use href="#under"/></svg>Undercut Analysis</button>
    <button class="rowbtn"><svg class="ico"><use href="#partl"/></svg>Parting Line Analysis</button>
  </div>
  <div class="rows c4">
    <button class="rowbtn"><svg class="ico"><use href="#symm"/></svg>Symmetry Check</button>
    <button class="rowbtn"><svg class="ico"><use href="#thick"/></svg>Thickness Analysis</button>
    <button class="rowbtn"><svg class="ico"><use href="#comp"/></svg>Compare Documents</button>
  </div>
  <button class="big tall w82"><svg class="ico"><use href="#cad"/></svg><span>Check<br>Active<br>Document</span><i class="caret"></i></button><div class="vsep"></div>
  <button class="big w108"><svg class="ico"><use href="#sim"/></svg><span class="text-nowrap">SimulationXpress<br>Analysis Wizard</span></button>
  <button class="big w72"><svg class="ico"><use href="#flo"/></svg><span>FloXpress<br>Analysis<br>Wizard</span></button>
  <button class="big w72"><svg class="ico"><use href="#dfm"/></svg><span class="text-nowrap">DFMXpress<br>Analysis<br>Wizard</span></button>
  <button class="big w128"><svg class="ico"><use href="#dwx"/></svg><span class="text-nowrap">DriveWorksXpress<br>Wizard</span></button>
  <button class="big w122"><svg class="ico"><use href="#sust"/></svg>Sustainability</button>
  <svg class="ms-auto me-2 mt-1" width="74" height="70" viewBox="0 0 74 70" fill="none" stroke="#d9dde9" stroke-width="4"><path d="M26 2c22-3 30 4 18 15l-14 11M8 37c26-4 36 3 24 15C26 60 14 65 5 67c1-6 8-16 14-26M72 24c-18-2-32 3-24 12 6 6 24 20 12 22-6 1-16 2-24 0"/></svg>
</section>
<div class="ribbonedge flex-shrink-0"></div>

<main class="work position-relative d-flex flex-column flex-grow-1">
  <svg class="scene" viewBox="0 128 1920 860" role="img" aria-label="LED strip model">
    <defs>
      <path id="padl" d="M400 782 448 763.500C464 757 482 758 484.500 769 486 778 480 783 470 787L423.500 805z"/>
      <path id="padr" d="M1567 308 1533 321.500C1523 325.500 1517 331 1519 336 1522 344 1543 346 1558 340L1594.500 325.500z"/>
      <g id="cavity" stroke="#111" stroke-width="3" stroke-linejoin="round"><g transform="translate(-291 -313)">
        <path d="M373 340C372 300 430 243 545 241 620 240 665 270 665 303 663 345 600 394 500 396 430 396 375 375 373 340z" fill="#6b6d7b"/>
        <path d="M381 358C381 318 440 275 545 267 620 265 664 290 663 314 655 350 595 394 500 396 440 396 390 380 381 358z" fill="#eef0f9"/>
        <path d="M392 318 520 263 540 272 542 281 412 335z" fill="#ecf4fc"/><path d="M394 319 411 330 542 277" fill="none" stroke-width="6"/>
        <path d="M454 338 548 301 573 320 571 346 603 370 550 387 522 366 484 360 454 343z" fill="#ecf4fc"/><path d="M454 341 484 360 522 366 552 388" fill="none" stroke-width="6"/>
        <path d="M568 292 604 278 590 264 650 290 595 311z" fill="#ecf4fc"/><path d="M568 294 595 312 652 291" fill="none" stroke-width="6"/>
        <path d="M595 312 652 291 663 308 655 328 617 343 592 324z" fill="#ecf4fc"/><path d="M594 322 617 343 655 328" fill="none" stroke-width="6"/>
        <path d="M390 364 432 348 458 368 425 383z" fill="#ecf4fc"/><path d="M430 387 474 368 500 388 498 396C470 396 445 393 430 387z" fill="#ecf4fc"/><path d="M428 384 458 372" stroke-width="6"/>
      </g></g>
    </defs>
    <g stroke="#111" stroke-linejoin="round">
      <path d="M390.500 773 519 899.500V904.500L390.500 777.500z" fill="#3b3c45"/>
      <path d="M519 899.500 1716 395.500V400.500L519.500 904.500z" fill="#74768a"/>
      <path d="M390.500 773 1552.500 301 1716 395.500 519 899.500z" fill="#fff"/>
      <g fill="#111" transform="translate(0 1)"><use href="#padl"/><use href="#padl" x="28" y="27"/><use href="#padl" x="56" y="54"/><use href="#padl" x="84" y="81"/>
      <use href="#padr"/><use href="#padr" x="34" y="20"/><use href="#padr" x="69" y="40"/><use href="#padr" x="104" y="60"/></g>
      <g fill="#fda369"><use href="#padl"/><use href="#padl" x="28" y="27"/><use href="#padl" x="56" y="54"/><use href="#padl" x="84" y="81"/></g>
      <g fill="#e9a066"><use href="#padr"/><use href="#padr" x="34" y="20"/><use href="#padr" x="69" y="40"/><use href="#padr" x="104" y="60"/></g>
      <path d="M630 714 685 761 687 774 633 726z" fill="#3f414b"/><path d="M685 761 786 720 788 732 687 774z" fill="#666876"/><path d="M630 714 730 672 786 720 685 761z" fill="#ecf4fc"/>
      <path d="M997 564 1056 608 1057 620 998 576z" fill="#43454f"/><path d="M1056 608 1151 569 1152 580 1057 620z" fill="#7c7e90"/><path d="M997 564 1090 525 1151 569 1056 608z" fill="#ecf4fc"/>
      <path d="M1340 424 1403 463 1404 476 1341 435z" fill="#595b69"/><path d="M1403 463 1492 427 1493 438 1404 476z" fill="#888a9b"/><path d="M1340 424 1427 387 1492 427 1403 463z" fill="#ecf4fc"/>
      <g fill="#ebf3fb"><path d="M809 672 829 663 854 684 835 692z"/><path d="M935 619 955 611 981 631 961 639z"/><path d="M1221 500 1244 490 1275 511 1252 521z"/></g>
      <path d="M809 672 835 692 854 684M935 619 961 639 981 631M1221 500 1252 521 1275 511" fill="none" stroke-width="2"/>
    </g>
    <use href="#cavity" transform="matrix(.341 .0044 -.0385 .3607 630.3 713.7)"/>
    <use href="#cavity" transform="matrix(.3333 0 0 .3333 997 564.3)"/>
    <use href="#cavity" transform="matrix(.3279 -.0022 .0407 .3055 1340.3 424)"/>
    <g>
      <path d="M248 922 236 911" stroke="#14148a" stroke-width="4"/><circle cx="234" cy="911" r="5" fill="#1a1aa0"/><path d="m228 907 6 1-3 4z" fill="#111"/>
      <path d="M247.500 922 245.500 901" stroke="#145a1c" stroke-width="5"/><path d="m244.500 890 6 11-11 1z" fill="#2c8a3c" stroke="#0d4214" stroke-width=".6"/>
      <path d="M248 922 228 930" stroke="#c01c22" stroke-width="5"/><path d="m217 935 10-9 3 9z" fill="#e4555b" stroke="#6c1114" stroke-width=".6"/>
      <g font-family="Liberation Sans, sans-serif" font-size="11"><text x="238" y="888" fill="#1b8a25">Y</text><text x="221" y="909" fill="#1c22c0">Z</text><text x="208" y="941" fill="#c2201e">X</text></g>
    </g>
  </svg>

  <nav class="cmtabs nav flex-nowrap flex-shrink-0 position-relative">
    <a class="nav-link t74" href="#">Features</a><a class="nav-link t61" href="#">Sketch</a><a class="nav-link t75" href="#">Surfaces</a><a class="nav-link t92" href="#">Sheet Metal</a><a class="nav-link t91" href="#">Weldments</a><a class="nav-link active t77" href="#">Evaluate</a><a class="nav-link t118" href="#">Office Products</a>
  </nav>

  <div class="headsup position-absolute d-flex">
    <button class="tool" aria-label="Zoom to fit"><svg class="ico"><use href="#zfit"/></svg></button>
    <button class="tool" aria-label="Zoom to area"><svg class="ico"><use href="#zarea"/></svg></button>
    <button class="tool" aria-label="Previous view"><svg class="ico"><use href="#prev"/></svg></button>
    <button class="tool" aria-label="Section view"><svg class="ico"><use href="#secv"/></svg></button>
    <button class="tool" aria-label="View orientation"><svg class="ico"><use href="#vori"/></svg></button><button class="drop" aria-label="Orientations"><i class="caret"></i></button>
    <button class="tool ms-1" aria-label="Display style"><svg class="ico"><use href="#dsty"/></svg></button><button class="drop" aria-label="Display styles"><i class="caret"></i></button>
    <button class="tool ms-1" aria-label="Hide items"><svg class="ico"><use href="#hide"/></svg></button><button class="drop" aria-label="Item types"><i class="caret"></i></button>
    <button class="tool" aria-label="Edit appearance"><svg class="ico"><use href="#ball"/></svg></button>
    <button class="tool" aria-label="Apply scene"><svg class="ico"><use href="#scn"/></svg></button><button class="drop" aria-label="Scenes"><i class="caret"></i></button>
    <button class="tool ms-1" aria-label="View settings"><svg class="ico"><use href="#vset"/></svg></button><button class="drop" aria-label="Settings list"><i class="caret"></i></button>
  </div>
  <div class="docbtns position-absolute d-flex">
    <button aria-label="Minimize document"><svg width="13" height="13"><use href="#wmin"/></svg></button><button aria-label="Restore document"><svg width="13" height="13"><use href="#wres"/></svg></button><button aria-label="Close document"><svg width="13" height="13"><use href="#wcls"/></svg></button>
  </div>

  <aside class="side d-flex flex-column flex-grow-1">
    <div class="sidehead d-flex align-items-end">
      <button class="ftab on" aria-label="Feature tree"><svg class="ico"><use href="#part"/></svg></button><button class="ftab" aria-label="Properties"><svg class="ico"><use href="#propman"/></svg></button><button class="ftab" aria-label="Configurations"><svg class="ico"><use href="#conf"/></svg></button><button class="ftab" aria-label="Dimensions"><svg class="ico"><use href="#target"/></svg></button><button class="ftab" aria-label="Display"><svg class="ico"><use href="#ball2"/></svg></button>
      <button class="more align-self-center" aria-label="Expand">»</button>
    </div>
    <label class="filter d-flex align-items-center"><svg width="12" height="12"><use href="#funnel"/></svg><input type="text" aria-label="Filter tree"></label>
    <ul class="tree">
      <li class="root"><svg class="ico"><use href="#part"/></svg>5050led&nbsp; (Default&lt;&lt;Defau</li>
      <li class="kid"><svg class="ico"><use href="#fsens"/></svg>Sensors</li>
      <li class="kid"><button class="plus" aria-label="Expand"></button><svg class="ico"><use href="#fann"/></svg>Annotations</li>
      <li class="kid"><svg class="ico"><use href="#mat"/></svg>Material &lt;not specified</li>
      <li class="kid"><svg class="ico"><use href="#plane"/></svg>Front Plane</li>
      <li class="kid"><svg class="ico"><use href="#plane"/></svg>Top Plane</li>
      <li class="kid"><svg class="ico"><use href="#plane"/></svg>Right Plane</li>
      <li class="kid"><svg class="ico"><use href="#origin"/></svg>Origin</li>
      <li class="kid"><button class="plus" aria-label="Expand"></button><svg class="ico"><use href="#boss"/></svg>Boss-Extrude1</li>
      <li class="kid"><button class="plus" aria-label="Expand"></button><svg class="ico"><use href="#boss"/></svg>Boss-Extrude2</li>
      <li class="kid"><button class="plus" aria-label="Expand"></button><svg class="ico"><use href="#cut"/></svg>Cut-Extrude1</li>
      <li class="kid"><button class="plus" aria-label="Expand"></button><svg class="ico"><use href="#boss"/></svg>Boss-Extrude3</li>
      <li class="kid"><button class="plus" aria-label="Expand"></button><svg class="ico"><use href="#boss"/></svg>Boss-Extrude4</li>
      <li class="kid"><svg class="ico"><use href="#mirror"/></svg>Mirror1</li>
      <li class="kid"><button class="plus" aria-label="Expand"></button><svg class="ico"><use href="#boss"/></svg>Boss-Extrude5</li>
    </ul>
    <div class="hbar d-flex mt-auto">
      <button aria-label="Scroll left"><svg width="5" height="9"><path d="M5 0v9L0 4.500z" fill="#333"/></svg></button>
      <div class="thumb"><i></i><i></i><i></i></div>
      <button class="ms-auto" aria-label="Scroll right"><svg width="5" height="9"><path d="M0 0v9l5-4.500z" fill="#333"/></svg></button>
    </div>
  </aside>
  <button class="handle position-absolute" aria-label="Collapse panel"><svg width="6" height="20"><path d="M5 2v5L2 4.500zM5 8v5l-3-2.500zM5 14v5l-3-2.500z" fill="#333"/></svg></button>
  <div class="taskpane position-absolute d-flex flex-column">
    <button aria-label="Resources"><svg class="ico"><use href="#home"/></svg></button><button aria-label="Design library"><svg class="ico"><use href="#lib"/></svg></button><button aria-label="File explorer"><svg class="ico"><use href="#fold"/></svg></button><button aria-label="View palette"><svg class="ico"><use href="#pal"/></svg></button><button class="on" aria-label="Appearances"><svg class="ico"><use href="#ball"/></svg></button><button aria-label="Custom properties"><svg class="ico"><use href="#props"/></svg></button>
  </div>
</main>

<div class="sheets d-flex flex-shrink-0">
  <div class="d-flex pe-1">
    <button class="vcr" aria-label="First"><svg width="9" height="12"><path d="M1 0v12M9 1v10L3 6z" fill="#80839a" stroke="#80839a"/></svg></button>
    <button class="vcr" aria-label="Previous"><svg width="9" height="12"><path d="M8 1v10L2 6z" fill="#80839a"/></svg></button>
    <button class="vcr" aria-label="Next"><svg width="9" height="12"><path d="M1 1v10l6-5z" fill="#80839a"/></svg></button>
    <button class="vcr" aria-label="Last"><svg width="9" height="12"><path d="M8 0v12M0 1v10l6-5z" fill="#80839a" stroke="#80839a"/></svg></button>
  </div>
  <nav class="nav flex-nowrap"><a class="nav-link active mtab" href="#">Model</a><a class="nav-link stab" href="#">Motion Study 1</a></nav>
</div>
<footer class="statusbar d-flex align-items-center flex-shrink-0">
  <span class="me-auto">Select entities to modify their appearance</span>
  <span class="pane"></span><span class="pane editing text-nowrap">Editing Part</span><span class="pane"></span><span class="pane"></span><span class="pane"></span>
  <svg class="ico statustag"><use href="#tag"/></svg>
</footer>
<footer class="taskbar d-flex flex-shrink-0">
  <button class="orb" aria-label="Start"><svg width="44" height="44" viewBox="0 0 44 44"><circle cx="22" cy="22" r="21" fill="url(#orbg)" stroke="#8fb0c8"/><path d="M4 18A18.500 18.500 0 0 1 40 18C30 24 14 24 4 18z" fill="#fff" opacity=".25"/><path d="M13 11c3.500-2 6-1 9 0l-2.500 10c-3.500-1-6-1.500-9 0z" fill="#e8592a"/><path d="M23.500 11.500c3.500 1.500 6.500 1.500 10 0L31 21.500c-3.500 1.500-6.500 1-10 0z" fill="#8cc63e"/><path d="M10 22.500c3.500-1.500 6-1 9 0l-2.500 9.500c-3.500-1-6-1.500-9 0z" fill="#4aa6e4"/><path d="M20.500 23c3.500 1 6.500 1.500 10 0L28 32.500c-3.500 1.500-6.500 1-10 0z" fill="#fbc92f"/></svg></button>
  <div class="d-flex gap-1">
    <button class="task" aria-label="Explorer"><svg width="42" height="40" viewBox="0 0 42 40"><path d="M3 3h9l2 3h26v30H3z" fill="#e9cf72"/><path d="M6 1h8v5H6z" fill="#5cae6c"/><path d="M17 3h8v5h-8z" fill="#fff"/><path d="M28 4h9v5h-9z" fill="#f8f1cf"/><path d="M1 8h39v29H1z" fill="#f5e08d"/><path d="M40 8v29H1" fill="none" stroke="#cfae4e"/><path d="M6 38V27q0-4 4-4h21q4 0 4 4v11h-5v-8H11v8z" fill="#97cbe8" stroke="#5e9cc4"/></svg></button>
    <button class="task progress-on" aria-label="Chrome"><svg width="36" height="36" viewBox="0 0 36 36"><circle cx="18" cy="18" r="17.500" fill="#fbd213"/><path d="M18 18 2.800 9.500A17.500 17.500 0 0 1 33.500 10H18z" fill="#df3a2e"/><path d="M18 18 2.800 9.500A17.500 17.500 0 0 0 17 35.500L25 22z" fill="#2ca04a"/><circle cx="18" cy="18" r="8" fill="#fff"/><circle cx="18" cy="18" r="6.300" fill="#3d7fd6"/></svg></button>
    <button class="task" aria-label="Skype"><svg width="36" height="36" viewBox="0 0 36 36"><circle cx="18" cy="18" r="15" fill="#12a5e8"/><circle cx="10" cy="10" r="9.500" fill="#12a5e8"/><circle cx="26" cy="26" r="9.500" fill="#12a5e8"/><path d="M25 12c-2-5-13-5-13 0 0 6 13 4 13 11 0 6-12 6-14 0" fill="none" stroke="#fff" stroke-width="4.500" stroke-linecap="round"/></svg></button>
    <div class="d-flex"><button class="task front" aria-label="SolidWorks"><svg width="40" height="36"><use href="#swcube"/></svg></button><span class="stack"></span><span class="stack"></span></div>
    <button class="task" aria-label="Adobe Reader"><svg width="38" height="38" viewBox="0 0 38 38"><path d="M1 1h36v36H1z" fill="#c11016"/><path d="M1 1h36v14L1 28z" fill="#e0302c"/><path d="M8 29c5-2 13-15 12-21-.5-3-3-2-2 2 2 7 8 15 13 15 4 0 2-4-4-3.500-7 .5-15 3-18 6-2 2-1 3.500 1 1z" fill="none" stroke="#fff" stroke-width="2"/></svg></button>
  </div>
  <div class="tray d-flex align-items-center ms-auto">
    <svg class="me-2" width="10" height="6"><path d="M0 6h10L5 0z" fill="#eee"/></svg>
    <svg width="18" height="20" viewBox="0 0 18 20"><path d="M1 1v18" stroke="#fff" stroke-width="1.500"/><path d="M3 2h7l1 2h6v8H9l-1-2H3z" fill="#f4f4f6"/><circle cx="12.500" cy="14" r="5" fill="#d8302a"/><path d="m10.500 12 4 4m0-4-4 4" stroke="#fff" stroke-width="1.600"/></svg>
    <svg width="16" height="14" viewBox="0 0 16 14"><path d="M1.500 14v-4M4.500 14V8M7.500 14V6M10.500 14V3M13.500 14V0" stroke="#fff" stroke-width="2"/></svg>
    <svg width="20" height="18" viewBox="0 0 20 18"><path d="M1 6h3l6-5v16l-6-5H1z" fill="#fff"/><path d="M13 6q2 3 0 6M15.500 4q3.500 5 0 10" fill="none" stroke="#ddd" stroke-width="1.300"/></svg>
    <svg width="20" height="18" viewBox="0 0 20 18"><path d="M7 0h6l7 11h-6.500z" fill="#fbc63e"/><path d="M7 0 0 12l3.500 6L10 5.500z" fill="#1ea361"/><path d="M7 11.500h13L16.500 18h-13z" fill="#3f7be8"/></svg>
    <div class="clock align-self-stretch">10:39 AM<br>12/11/2013</div>
  </div>
  <button class="peek" aria-label="Show desktop"></button>
</footer>
</div>
<script src="https://cdn.jsdelivr.net/npm/bootstrap@5.3.0/dist/js/bootstrap.bundle.min.js"></script>
</body>
</html>
